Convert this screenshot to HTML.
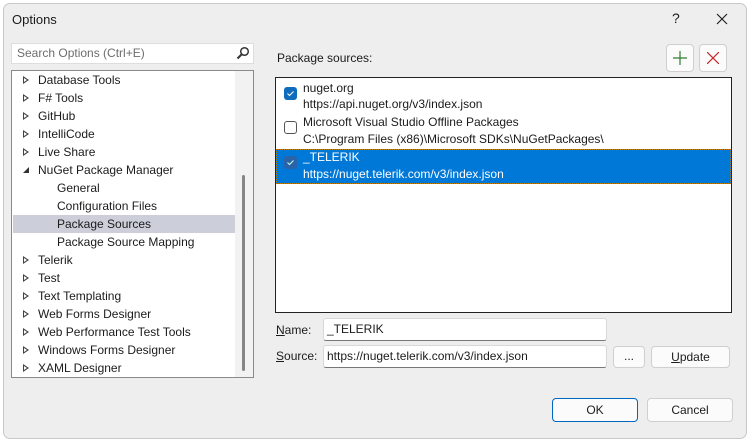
<!DOCTYPE html>
<html><head><style>
*{box-sizing:border-box;margin:0;padding:0}
body{width:750px;height:442px;background:#fff;font-family:"Liberation Sans",sans-serif;font-size:12px;color:#1b1b1b;position:relative;overflow:hidden}
.win{position:absolute;left:3px;top:3px;width:744px;height:436px;background:#eeeeee;border:1px solid #c8c8c8;border-radius:7px}
.a{position:absolute;white-space:nowrap}
.tree{position:absolute;left:11px;top:70px;width:243px;height:308px;background:#fff;border:1px solid #8a8a8a}
.row{position:absolute;left:1px;width:222px;height:18px;line-height:18px}
.tri{position:absolute;left:10px;top:5px;width:0;height:0;border-left:6px solid #444;border-top:4px solid transparent;border-bottom:4px solid transparent}
.tri::after{content:"";position:absolute;left:-5px;top:-2px;border-left:3px solid #fff;border-top:2px solid transparent;border-bottom:2px solid transparent}
.list{position:absolute;left:275px;top:77px;width:457px;height:236px;background:#fff;border:1px solid #222}
.cb{position:absolute;left:8px;width:13px;height:13px;border-radius:3px}
.inp{position:absolute;background:#fff;border:1px solid #d8d8d8;border-bottom:1px solid #777;border-radius:3px;padding-left:3px;line-height:20px}
.btn{position:absolute;background:#fbfbfb;border:1px solid #cfcfcf;border-radius:4px;text-align:center}
</style></head><body>
<div class="win"></div>
<div class="a" style="left:12px;top:12px;font-size:13px">Options</div>
<div class="a" style="left:672px;top:10px;font-size:14px">?</div>
<svg class="a" style="left:716px;top:13px" width="12" height="12"><path d="M1 1L11 11M11 1L1 11" stroke="#222" stroke-width="1.2"/></svg>
<div class="a" style="left:11px;top:43px;width:243px;height:21px;background:#fff;border:1px solid #ddd;color:#6d6d6d;padding-left:5px;line-height:19px">Search Options (Ctrl+E)</div>
<svg class="a" style="left:236px;top:46px" width="14" height="14"><circle cx="8.5" cy="5.5" r="3.8" fill="none" stroke="#333" stroke-width="1.5"/><path d="M6 8L1.5 12.5" stroke="#333" stroke-width="2"/></svg>
<div class="tree">
<div class="a" style="left:223px;top:0;width:18px;height:306px;background:#f2f2f2"></div>
<div class="a" style="left:230px;top:104px;width:3px;height:196px;background:#868686;border-radius:2px"></div>
<div class="row" style="top:0"><span class="tri"></span><span class="a" style="left:25px">Database Tools</span></div>
<div class="row" style="top:18px"><span class="tri"></span><span class="a" style="left:25px">F# Tools</span></div>
<div class="row" style="top:36px"><span class="tri"></span><span class="a" style="left:25px">GitHub</span></div>
<div class="row" style="top:54px"><span class="tri"></span><span class="a" style="left:25px">IntelliCode</span></div>
<div class="row" style="top:72px"><span class="tri"></span><span class="a" style="left:25px">Live Share</span></div>
<div class="row" style="top:90px"><svg class="a" style="left:9px;top:5px" width="8" height="8"><path d="M7 1L7 7L1 7Z" fill="#333"/></svg><span class="a" style="left:25px">NuGet Package Manager</span></div>
<div class="row" style="top:108px"><span class="a" style="left:44px">General</span></div>
<div class="row" style="top:126px"><span class="a" style="left:44px">Configuration Files</span></div>
<div class="row" style="top:144px;background:#ccced9"><span class="a" style="left:44px">Package Sources</span></div>
<div class="row" style="top:162px"><span class="a" style="left:44px">Package Source Mapping</span></div>
<div class="row" style="top:180px"><span class="tri"></span><span class="a" style="left:25px">Telerik</span></div>
<div class="row" style="top:198px"><span class="tri"></span><span class="a" style="left:25px">Test</span></div>
<div class="row" style="top:216px"><span class="tri"></span><span class="a" style="left:25px">Text Templating</span></div>
<div class="row" style="top:234px"><span class="tri"></span><span class="a" style="left:25px">Web Forms Designer</span></div>
<div class="row" style="top:252px"><span class="tri"></span><span class="a" style="left:25px">Web Performance Test Tools</span></div>
<div class="row" style="top:270px"><span class="tri"></span><span class="a" style="left:25px">Windows Forms Designer</span></div>
<div class="row" style="top:288px"><span class="tri"></span><span class="a" style="left:25px">XAML Designer</span></div>
</div>
<div class="a" style="left:277px;top:51px">Package sources:</div>
<div class="btn" style="left:666px;top:44px;width:28px;height:28px"><svg style="margin-top:6px" width="14" height="14"><path d="M7 0V14M0 7H14" stroke="#2e7d32" stroke-width="1.2"/></svg></div>
<div class="btn" style="left:699px;top:44px;width:28px;height:28px"><svg style="margin-top:7px" width="12" height="12"><path d="M0 0L12 12M12 0L0 12" stroke="#c62828" stroke-width="1.2"/></svg></div>
<div class="list">
<div class="cb" style="top:9px;background:#0f6cbd"><svg width="13" height="13"><path d="M3.5 6.5L5.5 8.5L9.5 4.5" stroke="#fff" fill="none"/></svg></div>
<div class="a" style="left:27px;top:3px">nuget.org</div>
<div class="a" style="left:27px;top:19px">https://api.nuget.org/v3/index.json</div>
<div class="cb" style="top:43px;border:1px solid #555;background:#fff"></div>
<div class="a" style="left:27px;top:37px">Microsoft Visual Studio Offline Packages</div>
<div class="a" style="left:27px;top:54px">C:\Program Files (x86)\Microsoft SDKs\NuGetPackages\</div>
<div class="a" style="left:0;top:71px;width:455px;height:35px;background:#0078d7;border:1px dotted #c08000"></div>
<div class="cb" style="top:78px;background:#2a63a8"><svg width="13" height="13"><path d="M3.5 6.5L5.5 8.5L9.5 4.5" stroke="#cfe" fill="none"/></svg></div>
<div class="a" style="left:27px;top:72px;color:#fff">_TELERIK</div>
<div class="a" style="left:27px;top:89px;color:#fff">https://nuget.telerik.com/v3/index.json</div>
</div>
<div class="a" style="left:276px;top:323px"><u>N</u>ame:</div>
<div class="a" style="left:276px;top:349px"><u>S</u>ource:</div>
<div class="inp" style="left:323px;top:318px;width:284px;height:23px">_TELERIK</div>
<div class="inp" style="left:323px;top:345px;width:284px;height:23px">https://nuget.telerik.com/v3/index.json</div>
<div class="btn" style="left:613px;top:346px;width:32px;height:22px;line-height:18px">...</div>
<div class="btn" style="left:651px;top:346px;width:79px;height:22px;line-height:20px"><u>U</u>pdate</div>
<div class="btn" style="left:552px;top:398px;width:86px;height:24px;line-height:22px;border:1px solid #0067c0">OK</div>
<div class="btn" style="left:647px;top:398px;width:86px;height:24px;line-height:22px">Cancel</div>
</body></html>
